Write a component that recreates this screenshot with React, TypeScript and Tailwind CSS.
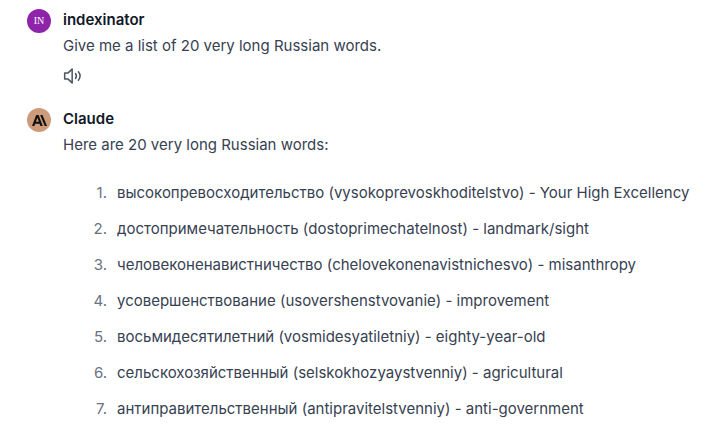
const words = [
  "высокопревосходительство (vysokoprevoskhoditelstvo) - Your High Excellency",
  "достопримечательность (dostoprimechatelnost) - landmark/sight",
  "человеконенавистничество (chelovekonenavistnichesvo) - misanthropy",
  "усовершенствование (usovershenstvovanie) - improvement",
  "восьмидесятилетний (vosmidesyatiletniy) - eighty-year-old",
  "сельскохозяйственный (selskokhozyaystvenniy) - agricultural",
  "антиправительственный (antipravitelstvenniy) - anti-government",
];

function SpeakerIcon() {
  return (
    <svg width="20" height="20" viewBox="0 0 24 24" fill="none" stroke="#4b5563" strokeWidth="1.8" strokeLinecap="round" strokeLinejoin="round">
      <path d="M2 8.5v7h3.8l5.2 4.8V3.700L5.800 8.500z" />
      <path d="M15 9a5 5 0 0 1 0 6M18.500 7a8 8 0 0 1 0 10" />
    </svg>
  );
}

export default function App() {
  return (
    <main className="h-[432px] w-[725px] overflow-hidden bg-white pl-[27px] pt-2 font-['Inter',sans-serif] text-[15px] leading-6 text-[#374151]">
      <section className="flex gap-3">
        <div className="mt-px flex size-6 shrink-0 items-center justify-center rounded-full bg-[#8e24aa] font-['Liberation_Serif',serif] text-[10px] text-white">IN</div>
        <div>
          <h2 className="font-semibold text-[#111827]">indexinator</h2>
          <p className="mt-0.5">Give me a list of 20 very long Russian words.</p>
          <div className="mt-2"><SpeakerIcon /></div>
        </div>
      </section>
      <section className="mt-[21px] flex gap-3">
        <div className="mt-px flex size-6 shrink-0 items-center justify-center rounded-full bg-[#cc9b7a]">
          <svg width="15" height="11" viewBox="0 0 15 11" fill="#111">
            <path fillRule="evenodd" d="M4.2 0h2.4L10.800 11H8.400l-.85-2.300H3.200L2.350 11H0zM3.900 6.700h3L5.400 2.700z" />
            <path d="M8.200 0h2.300L15 11h-2.300z" />
          </svg>
        </div>
        <div>
          <h2 className="font-semibold text-[#111827]">Claude</h2>
          <p className="mt-0.5">Here are 20 very long Russian words:</p>
          <ol className="mt-6 flex flex-col gap-3">
            {words.map((word, i) => (
              <li key={word} className="flex whitespace-nowrap">
                <span className="mr-2.5 w-11 text-right text-[#6b7280]">{i + 1}.</span>
                <span>{word}</span>
              </li>
            ))}
          </ol>
        </div>
      </section>
    </main>
  );
}
